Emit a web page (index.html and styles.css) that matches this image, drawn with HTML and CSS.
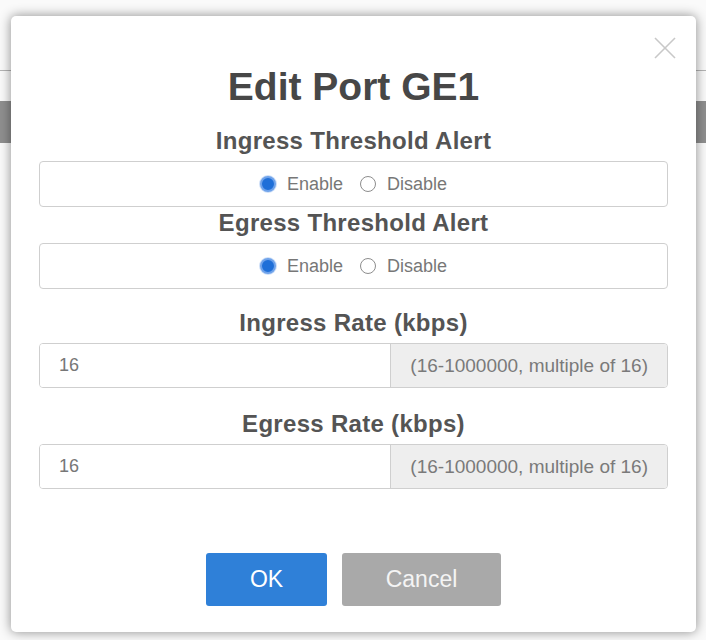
FILE: index.html
```html
<!DOCTYPE html>
<html lang="en">
<head>
  <meta charset="UTF-8" />
  <meta name="viewport" content="width=device-width, initial-scale=1.0" />
  <title>Edit Port GE1</title>
  <link rel="stylesheet" href="styles.css">
</head>
<body>
  <!-- Port table page, sitting behind the dialog -->
  <div class="page">
    <div class="page-rule"></div>
    <div class="page-bar"></div>
  </div>

  <!-- Edit Port dialog -->
  <div class="modal">
    <button class="close" title="Close">
      <svg width="22" height="22" viewBox="0 0 22 22">
        <line x1="1" y1="1" x2="21" y2="21" />
        <line x1="21" y1="1" x2="1" y2="21" />
      </svg>
    </button>

    <h1>Edit Port GE1</h1>

    <div class="alert-field">
      <div class="field-title">Ingress Threshold Alert</div>
      <div class="radio-box">
        <label><input type="radio" name="ingressAlert" checked> Enable</label>
        <label><input type="radio" name="ingressAlert"> Disable</label>
      </div>
    </div>

    <div class="alert-field">
      <div class="field-title">Egress Threshold Alert</div>
      <div class="radio-box">
        <label><input type="radio" name="egressAlert" checked> Enable</label>
        <label><input type="radio" name="egressAlert"> Disable</label>
      </div>
    </div>

    <div class="rate-field">
      <div class="field-title">Ingress Rate (kbps)</div>
      <div class="input-group">
        <input type="text" value="16">
        <span class="addon">(16-1000000, multiple of 16)</span>
      </div>
    </div>

    <div class="rate-field">
      <div class="field-title">Egress Rate (kbps)</div>
      <div class="input-group">
        <input type="text" value="16">
        <span class="addon">(16-1000000, multiple of 16)</span>
      </div>
    </div>

    <div class="actions">
      <button class="btn btn-ok">OK</button>
      <button class="btn btn-cancel">Cancel</button>
    </div>
  </div>
</body>
</html>
```

FILE: styles.css
```css
/* Global styles */
body {
  margin: 0;
  background: #fafafa;
  font-family: "Liberation Sans", Arial, sans-serif;
  color: #555;
  position: relative;
  height: 640px;
  overflow: hidden;
}
/* Page behind the dialog */
.page {
  padding-top: 70px;
}
.page-rule {
  height: 1px;
  background: #b4b4b4;
}
.page-bar {
  margin-top: 30px;
  height: 42px;
  background: #8f8f8f;
}
/* Dialog */
.modal {
  position: absolute;
  top: 16px;
  left: 11px;
  width: 685px;
  box-sizing: border-box;
  padding: 48px 28px 26px;
  background: #fff;
  border-radius: 5px;
  box-shadow: 0 0 12px rgba(0,0,0,0.45);
}
.close {
  position: absolute;
  top: 21px;
  right: 20px;
  padding: 0;
  border: none;
  background: none;
  cursor: pointer;
}
.close svg {
  display: block;
  stroke: #c8c8c8;
  stroke-width: 1.6;
}
h1 {
  margin: 0 0 17px;
  font-size: 39px;
  line-height: 46px;
  font-weight: bold;
  color: #474747;
  text-align: center;
}
.field-title {
  font-size: 24px;
  line-height: 28px;
  font-weight: bold;
  letter-spacing: 0.3px;
  text-align: center;
  color: #545454;
  margin-bottom: 6px;
}
.alert-field + .alert-field {
  margin-top: 2px;
}
.rate-field {
  margin-top: 20px;
}
.rate-field + .rate-field {
  margin-top: 22px;
}
/* Enable / Disable radios */
.radio-box {
  height: 46px;
  box-sizing: border-box;
  border: 1px solid #cfcfcf;
  border-radius: 4px;
  display: flex;
  justify-content: center;
  align-items: center;
  gap: 17px;
}
.radio-box label {
  display: flex;
  align-items: center;
  gap: 11px;
  font-size: 18px;
  color: #777;
}
.radio-box input {
  appearance: none;
  margin: 0;
  width: 16px;
  height: 16px;
  box-sizing: border-box;
  border: 1px solid #8d8d8d;
  border-radius: 50%;
  background: #fff;
}
.radio-box input:checked {
  border: 2px solid #6ea2ea;
  background: #1f6fd8;
  box-shadow: 0 0 0 1px #cfe0f8;
}
/* Rate input with range hint */
.input-group {
  height: 45px;
  box-sizing: border-box;
  display: flex;
  border: 1px solid #cfcfcf;
  border-radius: 4px;
  overflow: hidden;
}
.input-group input {
  flex: 1;
  min-width: 0;
  border: none;
  padding: 0 19px;
  font-family: inherit;
  font-size: 18px;
  color: #777;
  outline: none;
}
.addon {
  display: flex;
  align-items: center;
  padding: 0 19px;
  background: #eee;
  border-left: 1px solid #cfcfcf;
  font-size: 19px;
  color: #7a7a7a;
  white-space: nowrap;
}
/* Footer buttons */
.actions {
  margin-top: 64px;
  display: flex;
  justify-content: center;
  gap: 15px;
}
.btn {
  height: 53px;
  border: none;
  border-radius: 3px;
  font-family: inherit;
  font-size: 23px;
  cursor: pointer;
}
.btn-ok {
  width: 121px;
  background: #2f80d8;
  color: #fff;
}
.btn-cancel {
  width: 159px;
  background: #a9a9a9;
  color: #f4f4f4;
}
```
